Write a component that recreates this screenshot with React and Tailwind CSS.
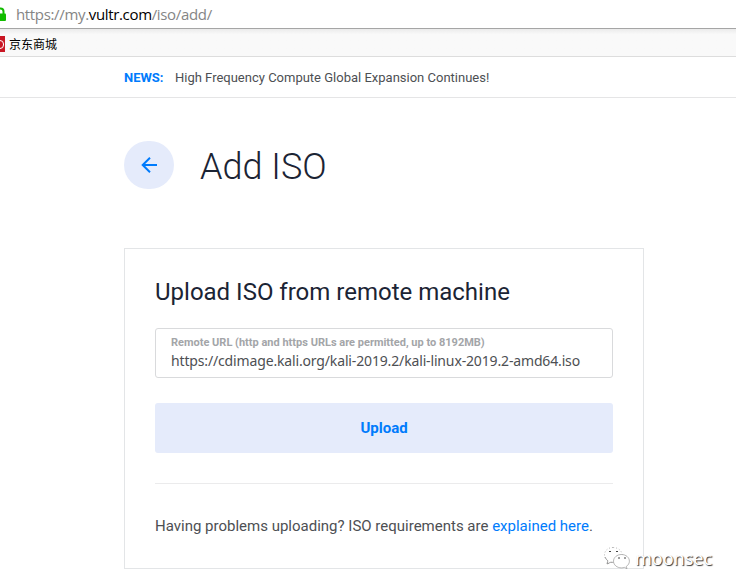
function LockIcon() {
  return (
    <svg className="-ml-1 h-[15px] w-[10px] shrink-0" viewBox="0 0 10 15" fill="none">
      <path d="M1.5 8V4.5a3 3 0 0 1 6 0V8" stroke="#12bc00" strokeWidth="2" />
      <rect x="-1" y="6.5" width="11" height="7.5" rx="1" fill="#12bc00" />
    </svg>
  );
}

function BackArrow() {
  return (
    <svg className="h-4 w-4" viewBox="0 0 16 16" fill="none" stroke="#007bfc" strokeWidth="2">
      <path d="M16 8H1.5M9 .8 1.7 8 9 15.2" />
    </svg>
  );
}

function ChatBubbles() {
  return (
    <svg className="h-[24px] w-[28px]" viewBox="0 0 28 24" fill="#fff" stroke="#888" strokeWidth=".6">
      <path strokeDasharray="1 2" d="M10 1.5C5 1.5 1.5 4.7 1.5 8.8c0 2.5 1.3 4.6 3.4 6L4 18l3.8-1.8c5.5 1 11.200-1.800 11.200-7.400C19 4.700 15 1.500 10 1.500Z" />
      <path d="M2 11c.6 1.600 1.600 2.900 2.900 3.800L4 18l3.800-1.800 2.700.2" stroke="#666" />
      <path d="M18.500 8.500c-4.500 0-8 3-8 6.700s3.500 6.700 8 6.700c1 0 2-.2 2.900-.5l2.600 1.300-.7-2.300c1.900-1.200 3.100-3.100 3.100-5.200 0-3.700-3.500-6.700-7.900-6.700Z" />
      <path d="M6 5.500h2M13 5.500h2M15 12h2M21 12h2" stroke="#444" strokeWidth="1" />
    </svg>
  );
}

export default function App() {
  return (
    <div className="relative flex h-[588px] w-[736px] flex-col overflow-hidden bg-white font-[Roboto,sans-serif] text-[#4d4f53]">
      <div className="flex h-[29px] shrink-0 items-center border-b border-[#a5a5a5]">
        <LockIcon />
        <span className="ml-[10px] whitespace-nowrap font-['Open_Sans',sans-serif] text-[15px] leading-5 tracking-[-0.34px] text-[#858585]">
          https://my.<span className="text-black">vultr.com</span>/iso/add/
        </span>
      </div>
      <div className="flex h-[28px] shrink-0 items-center border-b border-[#dddddd] bg-linear-to-b from-[#ebebeb] via-[#f9f9f9] via-20% to-[#f9f9f9] pt-[3px]">
        <div className="flex h-4 w-[5px] items-center justify-end overflow-hidden bg-[#c91623]">
          <div className="mr-px h-[9px] w-[8px] shrink-0 rounded-full border-[1.5px] border-white" />
        </div>
        <span className="ml-1 whitespace-nowrap font-['Noto_Sans_CJK_SC',sans-serif] text-[12px] leading-4 text-black">京东商城</span>
      </div>
      <div className="flex h-[41px] shrink-0 items-center border-b border-[#e5e5e6] pl-[124px] pt-[2px] text-[13px]">
        <span className="w-[51px] font-bold text-[#007bfc]">NEWS:</span>
        <span className="whitespace-nowrap">High Frequency Compute Global Expansion Continues!</span>
      </div>

      <main className="ml-[124px] w-[520px]">
        <div className="mt-[43px] flex h-12 items-center">
          <button className="flex h-12 w-[50px] items-center justify-center rounded-full bg-[#e5ebfb]">
            <BackArrow />
          </button>
          <h1 className="ml-[26px] mt-1 whitespace-nowrap text-[36px] font-light leading-12 text-[#1b2434]">Add ISO</h1>
        </div>

        <section className="mt-[59px] h-[321px] border border-[#e3e5e7] px-[30px] pt-[28px]">
          <h2 className="whitespace-nowrap text-[24px] leading-[30px] text-[#1b2434]">Upload ISO from remote machine</h2>
          <div className="mt-[21px] h-[50px] rounded-[3px] border border-[#d9dadc] px-[15px] pt-[7px]">
            <div className="whitespace-nowrap text-[11px] font-bold leading-[14px] text-[#a3a5a8]">
              Remote URL (http and https URLs are permitted, up to 8192MB)
            </div>
            <div className="whitespace-nowrap font-['Noto_Sans',sans-serif] text-[14px] leading-[22px] tracking-[-0.15px]">
              https://cdimage.kali.org/kali-2019.2/kali-linux-2019.2-amd64.iso
            </div>
          </div>
          <button className="mt-[25px] h-[50px] w-full rounded-[3px] bg-[#e5ebfb] text-[15px] font-bold text-[#007bfc]">Upload</button>
          <div className="mt-[30px] border-t border-[#ebebec] pt-[31px]">
            <p className="whitespace-nowrap text-[15px] leading-[22px]">
              Having problems uploading? ISO requirements are <a className="text-[#007bfc]">explained here</a>.
            </p>
          </div>
        </section>
      </main>

      <div className="absolute left-[603px] top-[546px] flex items-center">
        <ChatBubbles />
        <span className="ml-1 font-['Noto_Sans',sans-serif] text-[18px] leading-6 text-white [text-shadow:1px_1px_1px_#333]">moonsec</span>
      </div>
    </div>
  );
}
